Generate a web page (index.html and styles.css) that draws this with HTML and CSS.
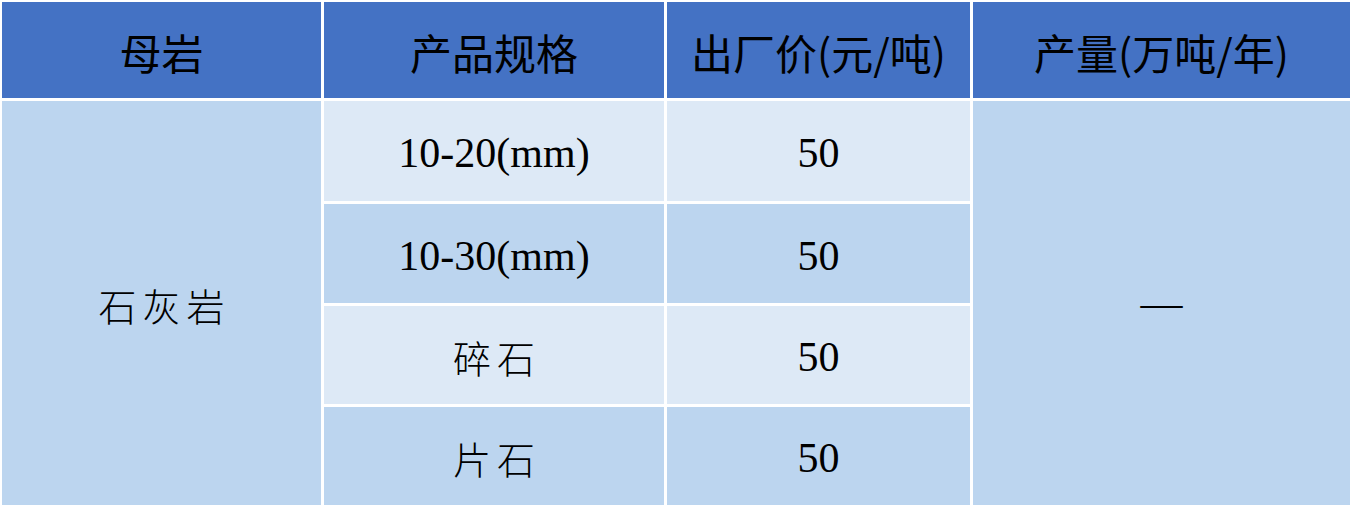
FILE: index.html
```html
<!DOCTYPE html>
<html lang="zh">
<head>
<meta charset="utf-8">
<link rel="stylesheet" href="styles.css">
</head>
<body>
<div class="table">
  <div class="cell head">母岩</div>
  <div class="cell head">产品规格</div>
  <div class="cell head">出厂价(元/吨)</div>
  <div class="cell head">产量(万吨/年)</div>

  <div class="cell dark cjk span-left">石灰岩</div>
  <div class="cell light num">10-20(mm)</div>
  <div class="cell light num">50</div>
  <div class="cell dark num span-right">—</div>

  <div class="cell dark num">10-30(mm)</div>
  <div class="cell dark num">50</div>

  <div class="cell light cjk">碎石</div>
  <div class="cell light num">50</div>

  <div class="cell dark cjk">片石</div>
  <div class="cell dark num">50</div>
</div>
</body>
</html>
```

FILE: styles.css
```css
html, body {
  margin: 0;
  padding: 0;
  background: #ffffff;
}

.table {
  display: grid;
  grid-template-columns: 319px 340px 303px 377px;
  grid-template-rows: 96px 100px 99px 98px 98px;
  gap: 3px;
  padding: 2px 6px 2px 2px;
  width: 1356px;
  height: 508px;
  box-sizing: border-box;
  background: #ffffff;
}

.cell {
  display: flex;
  align-items: center;
  justify-content: center;
  color: #000000;
}

.head {
  background: #4472c4;
  font-family: "Noto Sans CJK SC", "Liberation Sans", sans-serif;
  font-size: 42px;
  font-weight: 400;
  padding-top: 2px;
  box-sizing: border-box;
}

.light {
  background: #dde9f6;
}

.dark {
  background: #bcd5ef;
}

.num {
  font-family: "Liberation Serif", "Noto Sans CJK SC", serif;
  font-size: 42px;
  padding-top: 4px;
  box-sizing: border-box;
}

.cjk {
  font-family: "Noto Sans CJK SC", sans-serif;
  font-size: 38px;
  font-weight: 300;
  letter-spacing: 6px;
  padding-left: 6px;
  padding-top: 2px;
  box-sizing: border-box;
}

.span-left {
  grid-column: 1;
  grid-row: 2 / 6;
}

.span-right {
  grid-column: 4;
  grid-row: 2 / 6;
  padding-top: 0;
}
```
